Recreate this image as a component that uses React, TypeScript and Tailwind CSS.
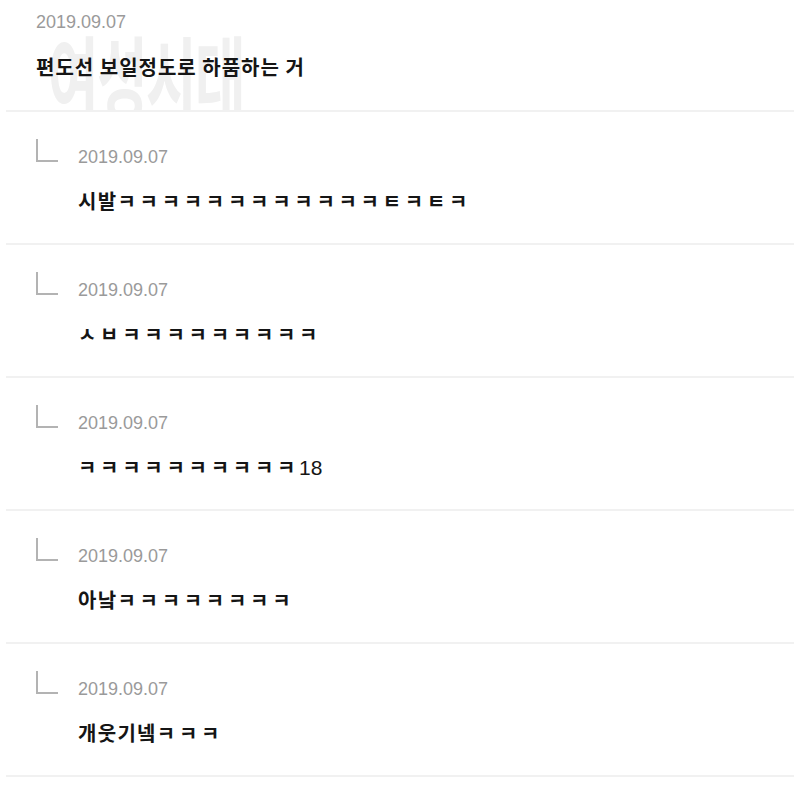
const replies = [
  '시발ㅋㅋㅋㅋㅋㅋㅋㅋㅋㅋㅋㅋㅌㅋㅌㅋ',
  'ㅅㅂㅋㅋㅋㅋㅋㅋㅋㅋㅋ',
  'ㅋㅋㅋㅋㅋㅋㅋㅋㅋㅋ18',
  '아낰ㅋㅋㅋㅋㅋㅋㅋㅋ',
  '개웃기넼ㅋㅋㅋ',
]

// 자모(ㅋ, ㅌ ...)는 간격을 따로 주고, 숫자는 얇게
function Comment({ text }: { text: string }) {
  return (
    <>
      {Array.from(text).map((ch, i) =>
        /[\u3131-\u318e]/.test(ch) ? (
          <span key={i} className="tracking-[3.7px]">{ch}</span>
        ) : /[0-9]/.test(ch) ? (
          <span key={i} className="font-['Liberation_Sans',sans-serif] font-normal text-[21px] tracking-normal">{ch}</span>
        ) : (
          <span key={i}>{ch}</span>
        )
      )}
    </>
  )
}

function Corner() {
  return (
    <svg width="24" height="26" viewBox="0 0 24 26" className="shrink-0">
      <path d="M2 1 V23 H23" fill="none" stroke="#b3b3b3" strokeWidth="2" />
    </svg>
  )
}

export default function App() {
  return (
    <div className="w-[800px] min-h-[793px] bg-white" style={{ fontFamily: '"Noto Sans CJK KR", "Noto Sans", sans-serif' }}>
      {/* 원글 */}
      <div className="relative overflow-hidden pl-[36px] pt-[10px] pb-[29px] mx-[6px] border-b-2 border-[#f1f1f1]">
        <div className="absolute left-[42px] top-[28px] text-[92px] leading-none font-bold text-[#f0f0f0] tracking-[-3px] select-none scale-x-[0.6] origin-left">여성시대</div>
        <div className="relative -ml-[6px] h-[24px] leading-[24px] text-[18px] text-[#9a9a9a]" style={{ fontFamily: '"Liberation Sans", sans-serif' }}>2019.09.07</div>
        <div className="relative -ml-[6px] mt-[19px] h-[28px] leading-[28px] text-[20px] font-bold text-[#151515] tracking-[1px]">편도선 보일정도로 하품하는 거</div>
      </div>

      {/* 답글 */}
      {replies.map((text, i) => (
        <div key={i} className="mx-[6px] border-b-2 border-[#f1f1f1] pt-[33px] pb-[28px]">
          <div className="flex items-start pl-[29px]">
            <div className="w-[43px] -mt-[7px]"><Corner /></div>
            <div>
              <div className="h-[24px] leading-[24px] text-[18px] text-[#9a9a9a]" style={{ fontFamily: '"Liberation Sans", sans-serif' }}>2019.09.07</div>
              <div className="mt-[18px] h-[28px] leading-[28px] text-[20px] font-bold text-[#151515] tracking-[1.3px] whitespace-nowrap">
                <Comment text={text} />
              </div>
            </div>
          </div>
        </div>
      ))}
    </div>
  )
}
